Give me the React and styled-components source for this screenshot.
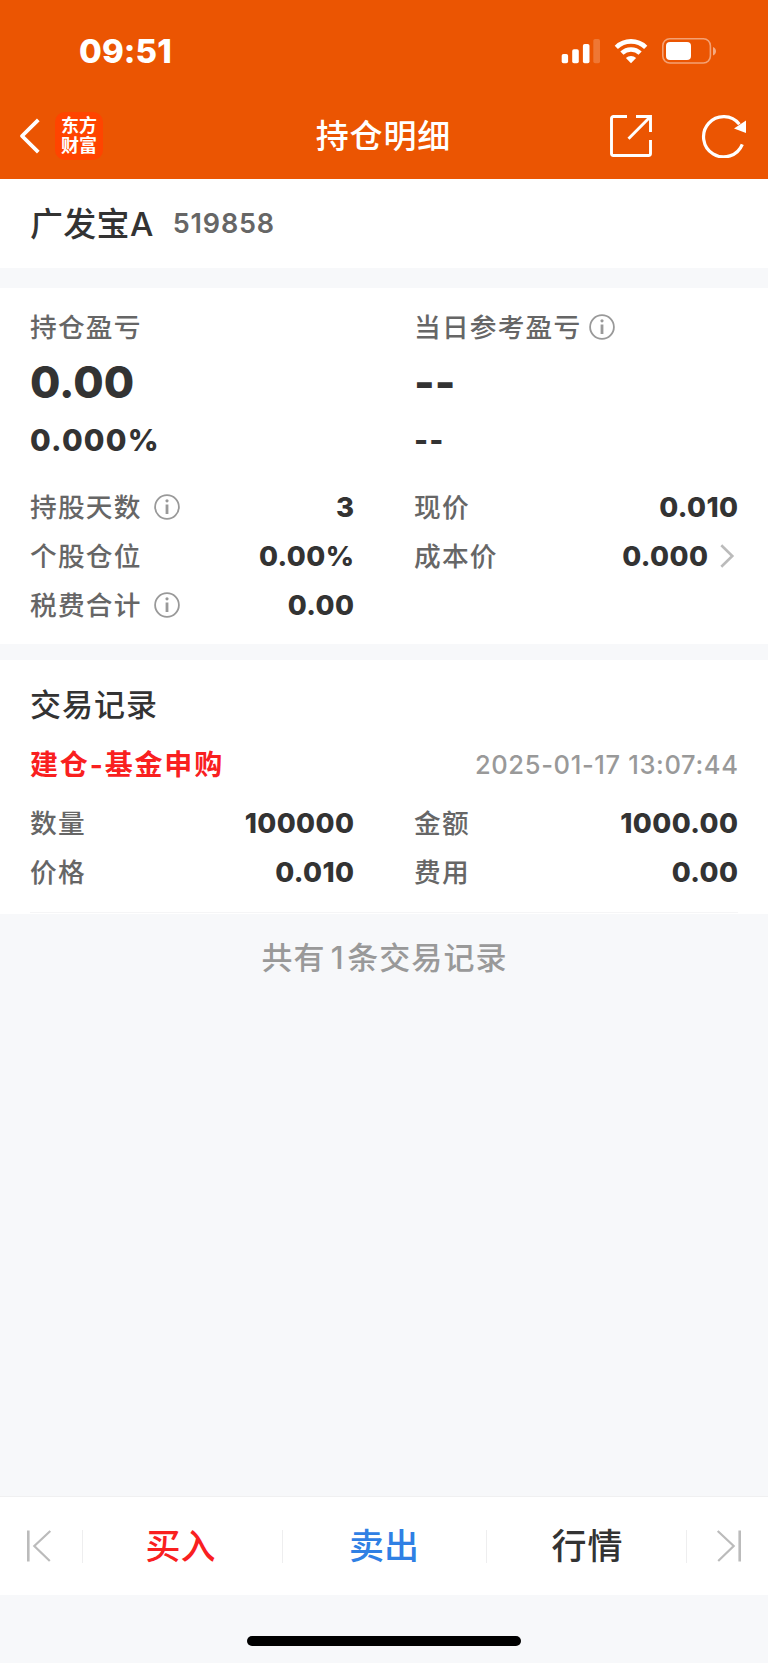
import React from "react";
import styled, { createGlobalStyle } from "styled-components";

const Global = createGlobalStyle`
  * { box-sizing: border-box; }
  body { margin: 0; background: #f7f8fa; }
`;

const Screen = styled.div`
  width: 768px;
  height: 1663px;
  display: flex;
  flex-direction: column;
  background: #f7f8fa;
  color: #333;
  font-family: Inter, "Noto Sans CJK SC", sans-serif;
`;

const Header = styled.header`
  height: 179px;
  background: #eb5502;
  color: #fff;
  display: flex;
  flex-direction: column;
`;

const StatusBar = styled.div`
  height: 93px;
  padding: 9px 51px 0 79px;
  display: flex;
  align-items: center;
  justify-content: space-between;
`;

const NavBar = styled.nav`
  height: 86px;
  padding: 0 21px 0 19px;
  display: grid;
  grid-template-columns: 1fr auto 1fr;
  align-items: center;
`;

const NavSide = styled.div`
  display: flex;
  align-items: center;
  gap: ${(p) => p.$gap}px;
  justify-content: ${(p) => (p.$end ? "flex-end" : "flex-start")};
`;

const Logo = styled.div`
  width: 48px;
  height: 48px;
  border-radius: 10px;
  background: #ff4400;
  color: #fff;
  display: flex;
  flex-direction: column;
  align-items: center;
  justify-content: center;
  font-size: 18px;
  font-weight: 700;
  line-height: 20.5px;
`;

const Text = styled.span`
  display: block;
  white-space: nowrap;
  font-size: ${(p) => p.$size}px;
  font-weight: ${(p) => p.$weight || 500};
  letter-spacing: ${(p) => p.$spacing || 0}px;
  margin-right: ${(p) => -(p.$spacing || 0)}px;
  line-height: ${(p) => p.$line || 40}px;
  color: ${(p) => p.$color || "inherit"};
`;

const Count = styled.span`
  padding: 0 2.5px 0 5px;
`;

const Panel = styled.section`
  height: ${(p) => p.$height}px;
  margin-bottom: ${(p) => p.$gap || 0}px;
  padding: ${(p) => p.$top || 0}px 30px 0;
  background: #fff;
`;

const FundName = styled(Panel)`
  display: flex;
  align-items: center;
  gap: 19.5px;
`;

const Columns = styled.div`
  display: grid;
  grid-template-columns: 324px 324px;
  column-gap: 60px;
`;

const Summary = styled.div`
  height: 175px;
`;

const LabelLine = styled.div`
  display: flex;
  align-items: center;
  gap: ${(p) => p.$gap}px;
`;

const Row = styled.div`
  height: 49.2px;
  display: flex;
  align-items: center;
  justify-content: space-between;
`;

const RecordHead = styled.div`
  height: 66px;
  margin-top: 7px;
  display: flex;
  align-items: center;
  justify-content: space-between;
`;

const Divider = styled.hr`
  height: 1px;
  margin: 15.6px 0 0;
  border: 0;
  background: #f5f5f6;
`;

const Total = styled.div`
  flex: 1;
  padding-top: 24px;
  display: flex;
  justify-content: center;
`;

const ActionBar = styled.footer`
  height: 99px;
  border-top: 1px solid #f0f0f1;
  background: #fff;
  display: grid;
  grid-template-columns: 82px 200px 204px 200px 82px;
  align-items: center;
`;

const Action = styled.div`
  height: 33px;
  padding: 0 ${(p) => p.$right || 0}px 0 ${(p) => p.$left || 0}px;
  display: flex;
  align-items: center;
  justify-content: center;
  border-left: ${(p) => (p.$first ? "0" : "1px solid #eeeeef")};
`;

const HomeArea = styled.div`
  height: 68px;
  padding-top: 41px;
  display: flex;
  justify-content: center;
`;

const HomeIndicator = styled.div`
  width: 274px;
  height: 10px;
  border-radius: 5px;
  background: #000;
`;

const StatusIcons = () => (
  <svg width="156" height="28" viewBox="561 37 156 28" fill="#fff">
    <rect x="561.7" y="54" width="6.4" height="9.3" rx="1.8" />
    <rect x="572.2" y="49.3" width="6.6" height="14" rx="1.8" />
    <rect x="582.9" y="44" width="6.6" height="19.3" rx="1.8" />
    <rect x="593.3" y="39" width="6.7" height="24.3" rx="1.8" opacity=".2" />
    <g fill="none" stroke="#fff" strokeWidth="4.6">
      <path d="M616.3 47.3A21.2 21.2 0 0 1 645.7 47.3" />
      <path d="M621.9 53.1A13.2 13.2 0 0 1 640.1 53.1" />
    </g>
    <path d="M631 63.2L625.9 58.1A7.4 7.4 0 0 1 636.1 58.1Z" />
    <rect x="662.8" y="38.7" width="47.6" height="24.3" rx="7" fill="none" stroke="#fff" strokeOpacity=".45" strokeWidth="1.6" />
    <rect x="666" y="42" width="25" height="18" rx="4" />
    <path d="M713 47c4 1.3 4 7.2 0 8.5Z" opacity=".5" />
  </svg>
);

const BackIcon = () => (
  <svg width="22" height="36" viewBox="0 0 22 36" fill="none" stroke="#fff" strokeWidth="3.8">
    <path d="M19.3 1.8L3 18L19.3 34.2" strokeLinejoin="round" />
  </svg>
);

const ShareIcon = () => (
  <svg width="44" height="44" viewBox="0 0 44 44" fill="none" stroke="#fff" strokeWidth="2.9">
    <path d="M18 2.5H4.5A2 2 0 0 0 2.5 4.5V39.5A2 2 0 0 0 4.5 41.5H39.5A2 2 0 0 0 41.5 39.5V26" />
    <path d="M27 2.5H41.5V18M40.8 3.2L19.5 24.8" />
  </svg>
);

const RefreshIcon = () => (
  <svg width="46" height="44" viewBox="0 0 46 44" fill="none" stroke="#fff" strokeWidth="3.2">
    <path d="M41.3 30.3A20.1 20.1 0 1 1 38.4 10.3" />
    <path d="M45 6.4V19L33 14.5Z" fill="#fff" stroke="none" />
  </svg>
);

const InfoIcon = () => (
  <svg width="26" height="26" viewBox="0 0 26 26">
    <circle cx="13" cy="13" r="11.9" fill="none" stroke="#999" strokeWidth="1.8" />
    <circle cx="13" cy="6.8" r="1.6" fill="#999" />
    <path d="M13 10.5V20" stroke="#999" strokeWidth="2.8" />
  </svg>
);

const Chevron = () => (
  <svg width="18" height="24" viewBox="0 0 18 24" fill="none" stroke="#bbb" strokeWidth="2.6">
    <path d="M1.3 1.3L12.3 12L1.3 22.7" />
  </svg>
);

const EdgeIcon = ({ flip }) => (
  <svg width="26" height="34" viewBox="0 0 26 34" fill="none" stroke="#bbb">
    <g transform={flip ? "translate(26 0) scale(-1 1)" : undefined}>
      <path d="M2.3 1.5V32.5" strokeWidth="2.6" />
      <path d="M24.3 2L8.3 17L23.8 32" strokeWidth="2.2" />
    </g>
  </svg>
);

const Label = ({ children }) => (
  <Text $size={26.7} $spacing={1.2} $color="#666">{children}</Text>
);

const Field = ({ label, value, info, chevron }) => (
  <Row>
    <LabelLine $gap={13.5}>
      <Label>{label}</Label>
      {info && <InfoIcon />}
    </LabelLine>
    <LabelLine $gap={12}>
      <Text $size={27.5} $weight={800} $spacing={0.4}>{value}</Text>
      {chevron && <Chevron />}
    </LabelLine>
  </Row>
);

const Metric = ({ label, amount, rate, info }) => (
  <Summary>
    <LabelLine $gap={8.5}>
      <Label>{label}</Label>
      {info && <InfoIcon />}
    </LabelLine>
    <Text $size={44} $weight={800} $line={70}>{amount}</Text>
    <Text $size={30} $weight={800} $line={46} $spacing={1.2}>{rate}</Text>
  </Summary>
);

export default function App() {
  return (
    <Screen>
      <Global />
      <Header>
        <StatusBar>
          <Text $size={33} $weight={800} $spacing={0.1}>09:51</Text>
          <StatusIcons />
        </StatusBar>
        <NavBar>
          <NavSide $gap={14}>
            <BackIcon />
            <Logo>
              <span>东方</span>
              <span>财富</span>
            </Logo>
          </NavSide>
          <Text $size={33} $spacing={0.8}>持仓明细</Text>
          <NavSide $gap={48} $end>
            <ShareIcon />
            <RefreshIcon />
          </NavSide>
        </NavBar>
      </Header>

      <FundName $height={89} $gap={20}>
        <Text $size={33} $spacing={0.3}>广发宝A</Text>
        <Text $size={27} $weight={600} $spacing={0.8} $color="#666">519858</Text>
      </FundName>

      <Panel $height={356} $gap={16} $top={19}>
        <Columns>
          <Metric label="持仓盈亏" amount="0.00" rate="0.000%" />
          <Metric label="当日参考盈亏" amount="--" rate="--" info />
          <div>
            <Field label="持股天数" value="3" info />
            <Field label="个股仓位" value="0.00%" />
            <Field label="税费合计" value="0.00" info />
          </div>
          <div>
            <Field label="现价" value="0.010" />
            <Field label="成本价" value="0.000" chevron />
          </div>
        </Columns>
      </Panel>

      <Panel $height={254} $top={25}>
        <Text $size={31} $spacing={1}>交易记录</Text>
        <RecordHead>
          <Text $size={28} $weight={700} $spacing={1.85} $color="#f9201f">建仓-基金申购</Text>
          <Text $size={25.5} $color="#999" $spacing={0.65}>2025-01-17 13:07:44</Text>
        </RecordHead>
        <Columns>
          <div>
            <Field label="数量" value="100000" />
            <Field label="价格" value="0.010" />
          </div>
          <div>
            <Field label="金额" value="1000.00" />
            <Field label="费用" value="0.00" />
          </div>
        </Columns>
        <Divider />
      </Panel>

      <Total>
        <Text $size={31} $spacing={1.1} $color="#999">共有<Count>1</Count>条交易记录</Text>
      </Total>

      <ActionBar>
        <Action $first $right={4}><EdgeIcon /></Action>
        <Action $right={4}><Text $size={35} $color="#f9201f">买入</Text></Action>
        <Action $right={1}><Text $size={35} $color="#2f80e4">卖出</Text></Action>
        <Action $left={1}><Text $size={35} $spacing={0.8}>行情</Text></Action>
        <Action $left={2}><EdgeIcon flip /></Action>
      </ActionBar>
      <HomeArea>
        <HomeIndicator />
      </HomeArea>
    </Screen>
  );
}
